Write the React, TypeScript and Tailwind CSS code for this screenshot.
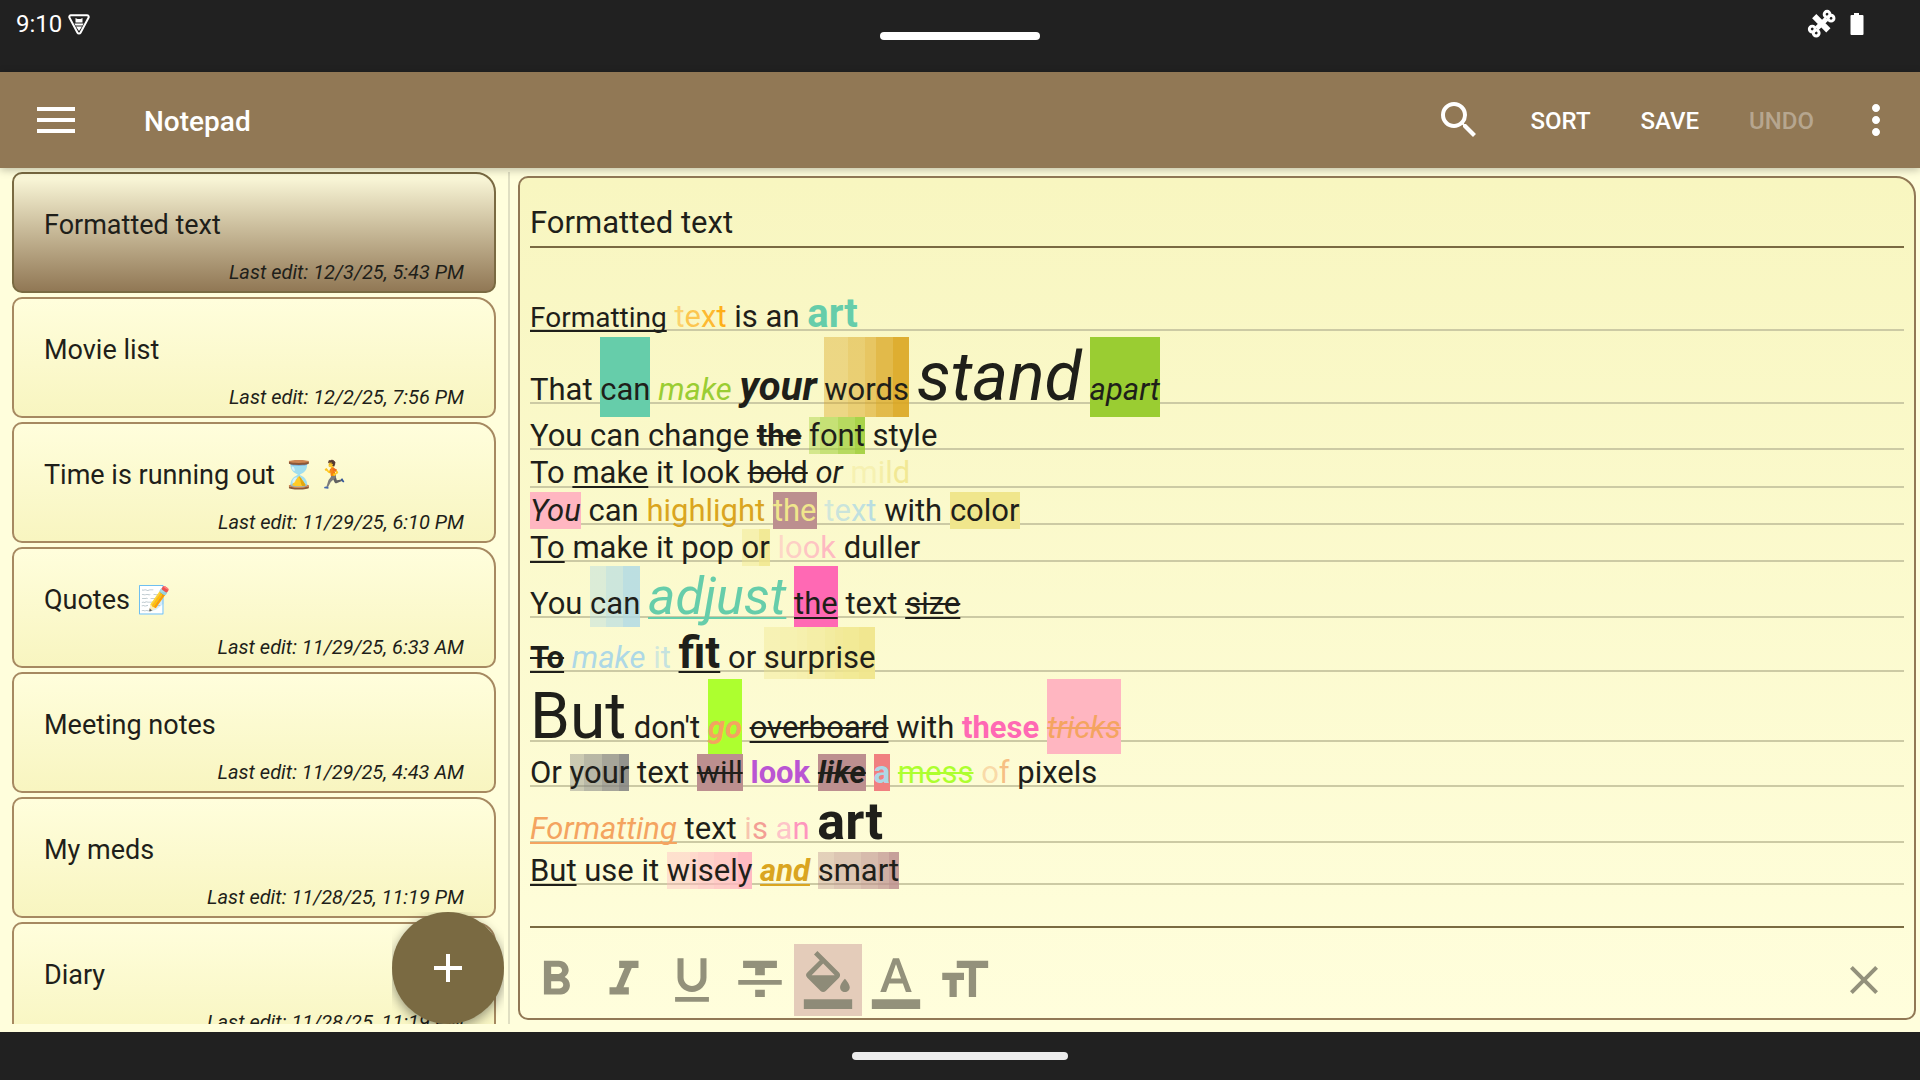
import type { ReactNode } from 'react';
import {
  MdAdd,
  MdClose,
  MdFormatBold,
  MdFormatColorFill,
  MdFormatColorText,
  MdFormatItalic,
  MdFormatSize,
  MdFormatStrikethrough,
  MdFormatUnderlined,
  MdMoreVert,
  MdSearch,
} from 'react-icons/md';

interface Note {
  title: string;
  edited: string;
}

const NOTES: Note[] = [
  { title: 'Formatted text', edited: '12/3/25, 5:43 PM' },
  { title: 'Movie list', edited: '12/2/25, 7:56 PM' },
  { title: 'Time is running out ⌛🏃', edited: '11/29/25, 6:10 PM' },
  { title: 'Quotes 📝', edited: '11/29/25, 6:33 AM' },
  { title: 'Meeting notes', edited: '11/29/25, 4:43 AM' },
  { title: 'My meds', edited: '11/28/25, 11:19 PM' },
  { title: 'Diary', edited: '11/28/25, 11:19 PM' },
];

const TOOLS = [
  { label: 'Bold', Icon: MdFormatBold },
  { label: 'Italic', Icon: MdFormatItalic },
  { label: 'Underline', Icon: MdFormatUnderlined },
  { label: 'Strikethrough', Icon: MdFormatStrikethrough },
  { label: 'Highlight', Icon: MdFormatColorFill, active: true },
  { label: 'Text color', Icon: MdFormatColorText },
  { label: 'Text size', Icon: MdFormatSize },
];

function StatusBar() {
  return (
    <div className="relative flex h-[72px] shrink-0 items-start justify-between bg-[#212121] px-4 text-white">
      <div className="flex h-12 items-center gap-1.5">
        <span className="text-2xl">9:10</span>
        <svg width="22" height="21" viewBox="0 0 22 21" fill="none">
          <path
            d="M3 1.200h16a1.700 1.700 0 0 1 1.500 2.500l-8 15a1.700 1.700 0 0 1-3 0l-8-15A1.700 1.700 0 0 1 3 1.200z"
            stroke="white"
            strokeWidth="2"
          />
          <path d="M7.500 4l2 1h3l2-1v4.500h-7zM6.500 9.500h9l-1 2h-7zM8 12.500h6L11 17z" fill="white" />
        </svg>
      </div>
      <div className="absolute left-1/2 top-8 h-2 w-40 -translate-x-1/2 rounded-full bg-white" />
      <div className="mr-10 flex h-12 items-center gap-3">
        {/* Satellite: two solar panels joined by the body */}
        <svg width="32" height="32" viewBox="0 0 32 32" fill="none">
          <g transform="rotate(-45 16 16)">
            <g stroke="white" strokeWidth="3">
              <circle cx="5.500" cy="12.700" r="2.900" />
              <circle cx="5.500" cy="18.300" r="2.900" />
              <circle cx="26.500" cy="12.700" r="2.900" />
              <circle cx="26.500" cy="18.300" r="2.900" />
            </g>
            <path d="M13 5h6v20h-6zM9 13h14v5H9z" fill="white" />
          </g>
        </svg>
        <svg width="14" height="22" viewBox="0 0 14 22" fill="white">
          <path d="M4 0h5v2h3.500q1 0 1 1v18q0 1-1 1h-11q-1 0-1-1V3q0-1 1-1H4z" />
        </svg>
      </div>
    </div>
  );
}

function AppBar() {
  return (
    <header className="relative z-10 flex h-24 shrink-0 items-center bg-[#917855] pl-8 pr-5 text-white shadow-[0_2px_8px_rgba(0,0,0,0.25)]">
      <button aria-label="Open menu" className="flex h-12 w-12 items-center justify-center">
        <svg width="38" height="26" viewBox="0 0 38 26" fill="white">
          <path d="M0 0h38v4H0zM0 11h38v4H0zM0 22h38v4H0z" />
        </svg>
      </button>
      <h1 className="ml-16 flex-1 pt-1 text-[28px] font-medium">Notepad</h1>
      <button aria-label="Search" className="mr-12">
        <MdSearch size={48} />
      </button>
      <div className="flex gap-[50px] pt-0.5 text-2xl font-medium">
        <button>SORT</button>
        <button>SAVE</button>
        <button disabled className="text-white/35">
          UNDO
        </button>
      </div>
      <button aria-label="More options" className="ml-[38px]">
        <MdMoreVert size={48} />
      </button>
    </header>
  );
}

function NoteCard({ note, selected }: { note: Note; selected: boolean }) {
  return (
    <li>
      <button
        className={`flex h-[121px] w-full flex-col justify-end rounded-[10px] rounded-tr-[20px] border-2 bg-linear-to-b px-[30px] pb-1 text-left ${
          selected
            ? 'border-[#7a6a42] from-[#fdfbdc] to-[#917855]'
            : 'border-[#a68961] from-[#fffedc] to-[#f8f5c0]'
        }`}
      >
        <span className="text-[27px] leading-9">{note.title}</span>
        <span className="mt-3.5 self-end text-xl leading-[30px] italic">Last edit: {note.edited}</span>
      </button>
    </li>
  );
}

function NoteList() {
  return (
    <aside className="relative w-[510px] shrink-0 overflow-hidden border-r-2 border-[#e0dfc2] pr-3 pl-3">
      <ul className="flex flex-col gap-1">
        {NOTES.map((note, i) => (
          <NoteCard key={note.title} note={note} selected={i === 0} />
        ))}
      </ul>
      {/* The shadow is cut off at the button's own box */}
      <div className="absolute right-1 bottom-0 overflow-hidden">
        <button
          aria-label="New note"
          className="flex h-28 w-28 items-center justify-center rounded-full bg-[#7a6a42] text-white shadow-[0_4px_12px_rgba(0,0,0,0.4)]"
        >
          <MdAdd size={48} />
        </button>
      </div>
    </aside>
  );
}

/** One ruled line of the note; the rule sits behind the highlights. */
function Line({ className, rule, children }: { className: string; rule: string; children: ReactNode }) {
  return (
    <p className={`relative isolate whitespace-pre ${className}`}>
      <span className={`absolute inset-x-0 -z-10 h-0.5 bg-[#cccaa4] ${rule}`} />
      {children}
    </p>
  );
}

/** Fades a word in letter by letter: one class name per letter. */
function Fade({ text, steps, className = '' }: { text: string; steps: string[]; className?: string }) {
  return (
    <>
      {text.split('').map((letter, i) => (
        <span key={i} className={`${steps[i]} ${className}`}>
          {letter}
        </span>
      ))}
    </>
  );
}

const UNDERLINE = 'underline decoration-2 underline-offset-3 [text-decoration-skip-ink:none]';
const STRIKE = 'line-through decoration-2';
const UNDER_STRIKE =
  '[text-decoration-line:underline_line-through] decoration-2 underline-offset-3 [text-decoration-skip-ink:none]';

function NoteBody() {
  return (
    <div className="mt-[42px] flex-1 text-[31px] leading-[normal]">
      <Line className="h-[47px]" rule="bottom-[6px]">
        <span className={`text-[28px] ${UNDERLINE}`}>Formatting</span>{' '}
        <Fade
          text="text"
          steps={['text-[#ffa500]/45', 'text-[#ffa500]/60', 'text-[#ffa500]/75', 'text-[#ffa500]/90']}
        />{' '}
        is an <b className="text-[40px] text-[#66cdaa]">art</b>
      </Line>
      <Line className="h-20" rule="bottom-[13px]">
        That <span className="bg-[#66cdaa] pt-[34px] pb-[9px]">can</span>{' '}
        <i className="text-[#9acd32]">make</i> <b className="text-[40px] italic">your</b>{' '}
        <Fade
          text="words"
          className="pt-[34px] pb-[9px]"
          steps={[
            'bg-[#daa520]/40',
            'bg-[#daa520]/50',
            'bg-[#daa520]/60',
            'bg-[#daa520]/75',
            'bg-[#daa520]/90',
          ]}
        />{' '}
        <i className="text-[68px]">stand</i>{' '}
        <i className="bg-[#9acd32] pt-[34px] pb-[9px]">apart</i>
      </Line>
      <Line className="h-[37px]" rule="bottom-1">
        You can change <b className={STRIKE}>the</b>{' '}
        <Fade
          text="font"
          steps={['bg-[#9acd32]/40', 'bg-[#9acd32]/55', 'bg-[#9acd32]/70', 'bg-[#9acd32]/85']}
        />{' '}
        style
      </Line>
      <Line className="h-[38px]" rule="bottom-1">
        To <span className={UNDERLINE}>make</span> it look <span className={STRIKE}>bold</span>{' '}
        <i>or</i>{' '}
        <Fade
          text="mild"
          steps={['text-[#f0e68c]/40', 'text-[#f0e68c]/55', 'text-[#f0e68c]/70', 'text-[#f0e68c]/85']}
        />
      </Line>
      <Line className="h-[37px]" rule="bottom-1">
        <i className="bg-[#ffb6c1]">You</i> can <span className="text-[#daa520]">highlight</span>{' '}
        <span className="bg-[#bc8f8f] text-[#f0e68c]">the</span>{' '}
        <Fade
          text="text"
          steps={['text-[#add8e6]/55', 'text-[#add8e6]/65', 'text-[#add8e6]/75', 'text-[#add8e6]/85']}
        />{' '}
        with <span className="bg-[#f0e68c]">color</span>
      </Line>
      <Line className="h-[37px]" rule="bottom-1">
        <span className={UNDERLINE}>To</span> make it pop{' '}
        <Fade text="or" steps={['bg-[#f0e68c]/45', 'bg-[#f0e68c]/85']} />{' '}
        <Fade
          text="look"
          steps={['text-[#ffb6c1]/50', 'text-[#ffb6c1]/65', 'text-[#ffb6c1]/80', 'text-[#ffb6c1]/95']}
        />{' '}
        duller
      </Line>
      <Line className="h-[61px]" rule="bottom-[9px]">
        You{' '}
        <Fade
          text="can"
          className="pt-[19px] pb-[5px]"
          steps={['bg-[#add8e6]/40', 'bg-[#add8e6]/60', 'bg-[#add8e6]/80']}
        />{' '}
        <i className={`text-[52px] text-[#66cdaa] ${UNDERLINE}`}>adjust</i>{' '}
        <span className={`bg-[#ff69b4] pt-[19px] pb-[5px] ${UNDERLINE}`}>the</span> text{' '}
        <span className={UNDER_STRIKE}>size</span>
      </Line>
      <Line className="h-[52px]" rule="bottom-[7px]">
        <b className={UNDER_STRIKE}>To</b> <i className="text-[#add8e6]">make</i>{' '}
        <Fade text="it" steps={['text-[#add8e6]/55', 'text-[#add8e6]/70']} />{' '}
        <b className={`text-[44px] ${UNDERLINE}`}>fit</b> or{' '}
        <Fade
          text="surprise"
          className="pt-3 pb-[3px]"
          steps={[
            'bg-[#f0e68c]/40',
            'bg-[#f0e68c]/45',
            'bg-[#f0e68c]/50',
            'bg-[#f0e68c]/60',
            'bg-[#f0e68c]/70',
            'bg-[#f0e68c]/80',
            'bg-[#f0e68c]/85',
            'bg-[#f0e68c]/95',
          ]}
        />
      </Line>
      <Line className="h-[75px]" rule="bottom-3">
        <span className="text-[64px]">But</span> don't{' '}
        <b className="bg-[#adff2f] pt-[30px] pb-2 text-[#f4a460] italic">go</b>{' '}
        <span className={UNDER_STRIKE}>overboard</span> with <b className="text-[#ff69b4]">these</b>{' '}
        <i className={`bg-[#ffb6c1] pt-[30px] pb-2 text-[#f4a460] ${STRIKE}`}>tricks</i>
      </Line>
      <Line className="h-[37px]" rule="bottom-1">
        Or{' '}
        <Fade
          text="your"
          steps={['bg-[#808080]/40', 'bg-[#808080]/55', 'bg-[#808080]/70', 'bg-[#808080]/85']}
        />{' '}
        text <span className={`bg-[#bc8f8f] ${STRIKE}`}>will</span>{' '}
        <b className="text-[#ba55d3]">look</b> <b className={`bg-[#bc8f8f] italic ${STRIKE}`}>like</b>{' '}
        <b className="bg-[#f08080] text-[#add8e6]">a</b>{' '}
        <span className={`text-[#adff2f] ${STRIKE}`}>mess</span>{' '}
        <Fade text="of" steps={['text-[#f4a460]/40', 'text-[#f4a460]/70']} /> pixels
      </Line>
      <Line className="h-[61px]" rule="bottom-[9px]">
        <i className={`text-[#f4a460] ${UNDERLINE}`}>Formatting</i> text{' '}
        <Fade text="is" steps={['text-[#f08080]/45', 'text-[#f08080]/75']} />{' '}
        <Fade text="an" steps={['text-[#ff69b4]/40', 'text-[#ff69b4]/70']} />{' '}
        <b className="text-[52px]">art</b>
      </Line>
      <Line className="h-[38px]" rule="bottom-[5px]">
        <span className={UNDERLINE}>But</span> use it{' '}
        <Fade
          text="wisely"
          steps={[
            'bg-[#ffb6c1]/40',
            'bg-[#ffb6c1]/50',
            'bg-[#ffb6c1]/60',
            'bg-[#ffb6c1]/70',
            'bg-[#ffb6c1]/80',
            'bg-[#ffb6c1]/95',
          ]}
        />{' '}
        <b className={`text-[#daa520] italic ${UNDERLINE}`}>and</b>{' '}
        <Fade
          text="smart"
          steps={[
            'bg-[#bc8f8f]/40',
            'bg-[#bc8f8f]/50',
            'bg-[#bc8f8f]/60',
            'bg-[#bc8f8f]/70',
            'bg-[#bc8f8f]/85',
          ]}
        />
      </Line>
    </div>
  );
}

function Editor() {
  return (
    <main className="mt-1 mr-1 mb-1 ml-2 flex min-w-0 flex-1 flex-col rounded-[10px] rounded-tr-[20px] border-2 border-[#917855] bg-linear-to-b from-[#f8f6c0] to-[#fffedc] px-[10px]">
      <input
        aria-label="Note title"
        defaultValue="Formatted text"
        className="h-[70px] shrink-0 border-b-2 border-[#7a6a42] bg-transparent pt-5 text-[31px] outline-none"
      />
      <NoteBody />
      <div className="h-0.5 shrink-0 bg-[#7a6a42]" />
      <div className="-ml-2 flex h-[90px] shrink-0 items-center pt-3.5 text-[#93917b]">
        {TOOLS.map(({ label, Icon, active }) => (
          <button
            key={label}
            aria-label={label}
            className={`flex h-[72px] w-[68px] items-center justify-center ${
              active ? 'bg-[#e4ccba] text-[#8e8b78]' : ''
            }`}
          >
            <Icon size={58} />
          </button>
        ))}
        <button aria-label="Close toolbar" className="mr-4 ml-auto">
          <MdClose size={48} />
        </button>
      </div>
    </main>
  );
}

export default function App() {
  return (
    <div className="flex h-screen flex-col overflow-hidden bg-[#fffedc] font-[Roboto,sans-serif] text-[#1f1f1a]">
      <StatusBar />
      <AppBar />
      <div className="flex min-h-0 flex-1 pt-1 pb-2">
        <NoteList />
        <Editor />
      </div>
      <div className="flex h-12 shrink-0 items-center justify-center bg-[#212121]">
        <div className="h-2 w-54 rounded-full bg-[#ececec]" />
      </div>
    </div>
  );
}
